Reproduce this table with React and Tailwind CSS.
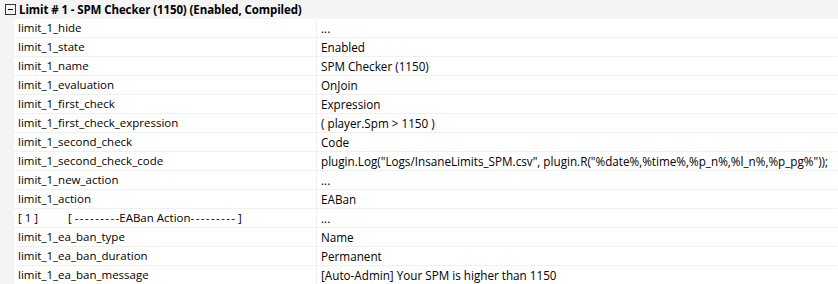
const dashes = (
  <>
    <span className="tracking-[1.4px]">--------</span>-
  </>
);

const rows = [
  ["limit_1_hide", "..."],
  ["limit_1_state", "Enabled"],
  ["limit_1_name", "SPM Checker (1150)"],
  ["limit_1_evaluation", "OnJoin"],
  ["limit_1_first_check", "Expression"],
  ["limit_1_first_check_expression", "( player.Spm > 1150 )"],
  ["limit_1_second_check", "Code"],
  [
    "limit_1_second_check_code",
    'plugin.Log("Logs/InsaneLimits_SPM.csv", plugin.R("%date%,%time%,%p_n%,%l_n%,%p_pg%"));',
  ],
  ["limit_1_new_action", "..."],
  ["limit_1_action", "EABan"],
  [
    <>
      <span className="inline-block w-[50px]">[ 1 ]</span>[ {dashes}EABan Action{dashes} ]
    </>,
    "...",
  ],
  ["limit_1_ea_ban_type", "Name"],
  ["limit_1_ea_ban_duration", "Permanent"],
  ["limit_1_ea_ban_message", "[Auto-Admin] Your SPM is higher than 1150"],
];

export default function App() {
  return (
    <div
      className="w-[838px] h-[284px] overflow-hidden bg-white text-[11.5px] text-black"
      style={{ fontFamily: '"Open Sans", "Noto Sans", sans-serif' }}
    >
      <div className="flex items-center h-[19px] bg-[#f4f4f4]">
        <div className="w-[19px] flex justify-center pl-[1px]">
          <svg width="11" height="11" viewBox="0 0 11 11">
            <rect x="0.5" y="0.5" width="10" height="10" fill="none" stroke="#333" />
            <path d="M3 5.5h5" stroke="#000" />
          </svg>
        </div>
        <span className="font-bold tracking-[-0.1px] whitespace-nowrap">
          Limit # 1 - SPM Checker (1150) (Enabled, Compiled)
        </span>
      </div>
      <div className="flex">
        <div className="w-[14px] shrink-0 bg-[#f4f4f4]" />
        <div className="w-[823px]">
          {rows.map(([name, value], i) => (
            <div key={i} className="flex h-[19px] border-b border-[#f0f0f0]">
              <div className="w-[303px] shrink-0 pl-[4px] leading-[18px] whitespace-pre border-r border-[#f0f0f0]">
                {name}
              </div>
              <div className="pl-[4px] leading-[18px] whitespace-nowrap text-[11.7px]">{value}</div>
            </div>
          ))}
        </div>
      </div>
    </div>
  );
}
